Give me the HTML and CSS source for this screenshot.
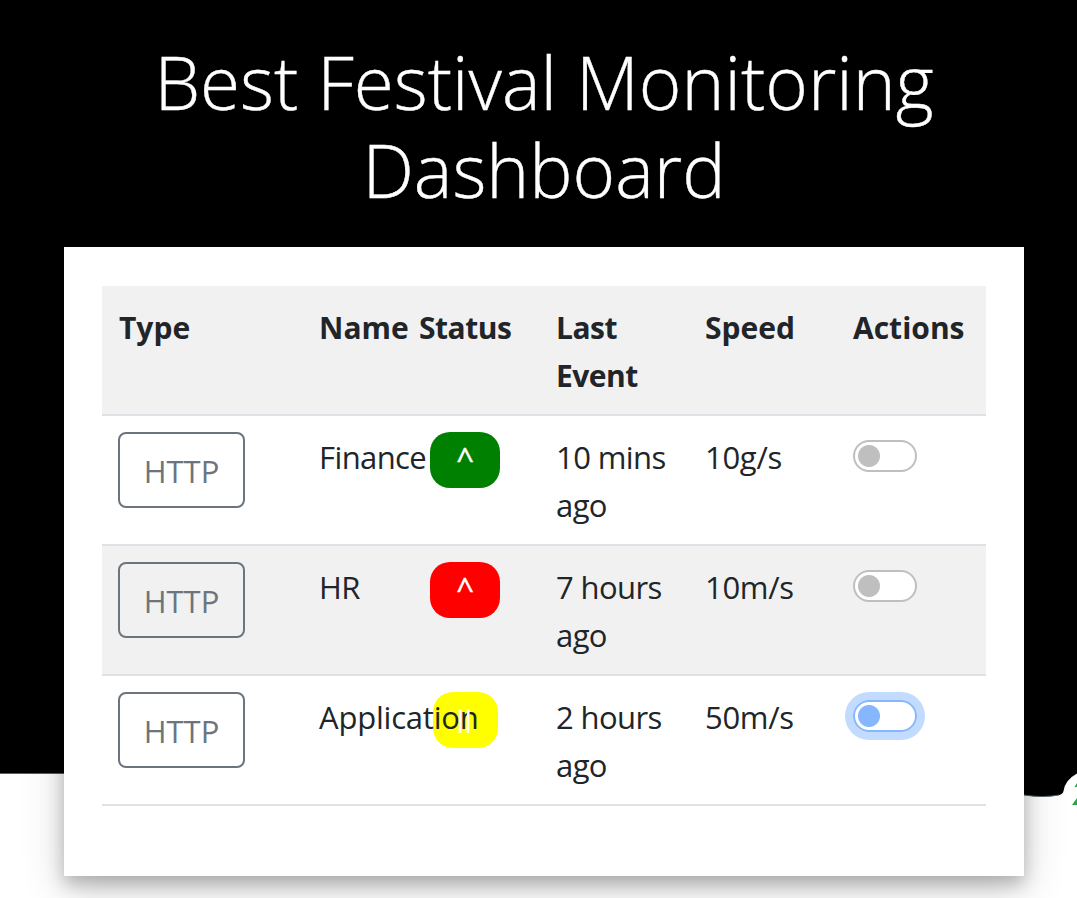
FILE: index.html
```html
<!DOCTYPE html>
<html lang="en">
<head>
<meta charset="utf-8">
<title>Best Festival Monitoring Dashboard</title>
<link rel="stylesheet" href="styles.css">
</head>
<body>
<svg class="backdrop" viewBox="0 0 1077 898" aria-hidden="true">
  <path d="M0 0H1077V773.500Q1065 780 1063.500 791Q1063 794 1059 795Q1043 798 1024 795L900 773.500H0Z" fill="#000"/>
  <path d="M0 773.500H64M1024 795Q1043 798 1059 795" fill="none" stroke="#52606b" stroke-width="1"/>
  <path d="M1077 783L1074.500 787H1077ZM1077 798L1072 805H1077Z" fill="#28a745"/>
</svg>
<main class="page">
  <h1 class="title">Best Festival Monitoring Dashboard</h1>
  <section class="card">
    <table class="monitors">
      <colgroup><col class="c-type"><col class="c-name"><col class="c-status"><col class="c-event"><col class="c-speed"><col class="c-actions"></colgroup>
      <thead>
        <tr class="shaded"><th>Type</th><th>Name</th><th class="status">Status</th><th class="event">Last Event</th><th>Speed</th><th>Actions</th></tr>
      </thead>
      <tbody>
        <tr><td><button class="btn">HTTP</button></td><td class="name">Finance</td><td class="status"><div class="badge up">^</div></td><td>10 mins ago</td><td class="speed">10g/s</td><td><span class="switch"></span></td></tr>
        <tr class="shaded"><td><button class="btn">HTTP</button></td><td class="name">HR</td><td class="status"><div class="badge down">^</div></td><td>7 hours ago</td><td class="speed">10m/s</td><td><span class="switch"></span></td></tr>
        <tr><td><button class="btn">HTTP</button></td><td class="name application">Application</td><td class="status"><div class="badge paused">||</div></td><td>2 hours ago</td><td class="speed">50m/s</td><td><span class="switch focused"></span></td></tr>
      </tbody>
    </table>
  </section>
</main>
</body>
</html>
```
FILE: styles.css
```css
* { box-sizing: border-box; }
body {
  margin: 0;
  height: 898px;
  overflow: hidden;
  background: #fff;
  color: #212529;
  font-family: "Open Sans", "Noto Sans", sans-serif;
  font-size: 31px;
  line-height: 48px;
}
.backdrop { position: absolute; top: 0; left: 0; width: 1077px; height: 898px; z-index: -1; }
.page { width: 960px; margin: 0 0 0 64px; padding-top: 38px; }
.title {
  margin: 0 0 33px;
  color: #fff;
  text-align: center;
  font-size: 72.8px;
  font-weight: 300;
  line-height: 88px;
  -webkit-text-stroke: .4px #fff;
}
.card {
  height: 629px;
  padding: 39px 38px;
  background: #fff;
  box-shadow: 0 8px 16px rgba(0, 0, 0, .22), 0 12px 40px rgba(0, 0, 0, .19);
}
.monitors { width: 884px; table-layout: fixed; border-spacing: 0; }
.c-type { width: 200px; }
.c-name { width: 100px; }
.c-status { width: 138px; }
.c-event { width: 149px; }
.c-speed { width: 148px; }
.c-actions { width: 149px; }
th, td {
  height: 130px;
  padding: 17px 16px 0 17px;
  border-bottom: 2px solid #dee2e6;
  text-align: left;
  vertical-align: top;
}
td { letter-spacing: -.6px; }
th { padding-top: 18px; padding-right: 0; font-weight: 700; font-size: 30px; }
td:nth-child(n+4), th:nth-child(n+4) { padding-left: 16px; }
td.status { padding: 16px 28px 0 16px; }
th.status { letter-spacing: -.5px; }
th.event { letter-spacing: -.5px; }
td.speed { letter-spacing: -.3px; }
td.application { letter-spacing: -.2px; }
.shaded { background: #f1f1f1; }
.name { white-space: nowrap; }
.btn {
  display: block;
  width: 127px;
  height: 76px;
  margin: -1px 0 0 -1px;
  padding: 2px 0 0;
  border: 2px solid #6c757d;
  border-radius: 8px;
  background: transparent;
  color: #6c757d;
  font: inherit;
  letter-spacing: 0;
}
.badge {
  width: 70px;
  height: 56px;
  margin: 0 auto;
  padding-top: 2px;
  border-radius: 20px;
  color: #fff;
  text-align: center;
  letter-spacing: 0;
}
.up, .down { -webkit-text-stroke: .5px #fff; }
.up { background: #008000; }
.down { background: #f00; }
.paused {
  width: 65px;
  padding-top: 3px;
  background: #ff0;
  font-size: 22.500px;
  font-weight: 700;
  letter-spacing: -4.500px;
  text-indent: -6px;
}
.switch {
  display: block;
  width: 64px;
  height: 32px;
  margin-top: 7px;
  border: 2px solid #bfbfbf;
  border-radius: 16px;
  background: radial-gradient(circle at 14px 14px, #bfbfbf 10.500px, #fff 11.500px);
}
.focused {
  border-color: #86b7fe;
  background: radial-gradient(circle at 14px 14px, #86b7fe 10.500px, #fff 11.500px);
  box-shadow: 0 0 0 8px #c2dbfe;
}
```
